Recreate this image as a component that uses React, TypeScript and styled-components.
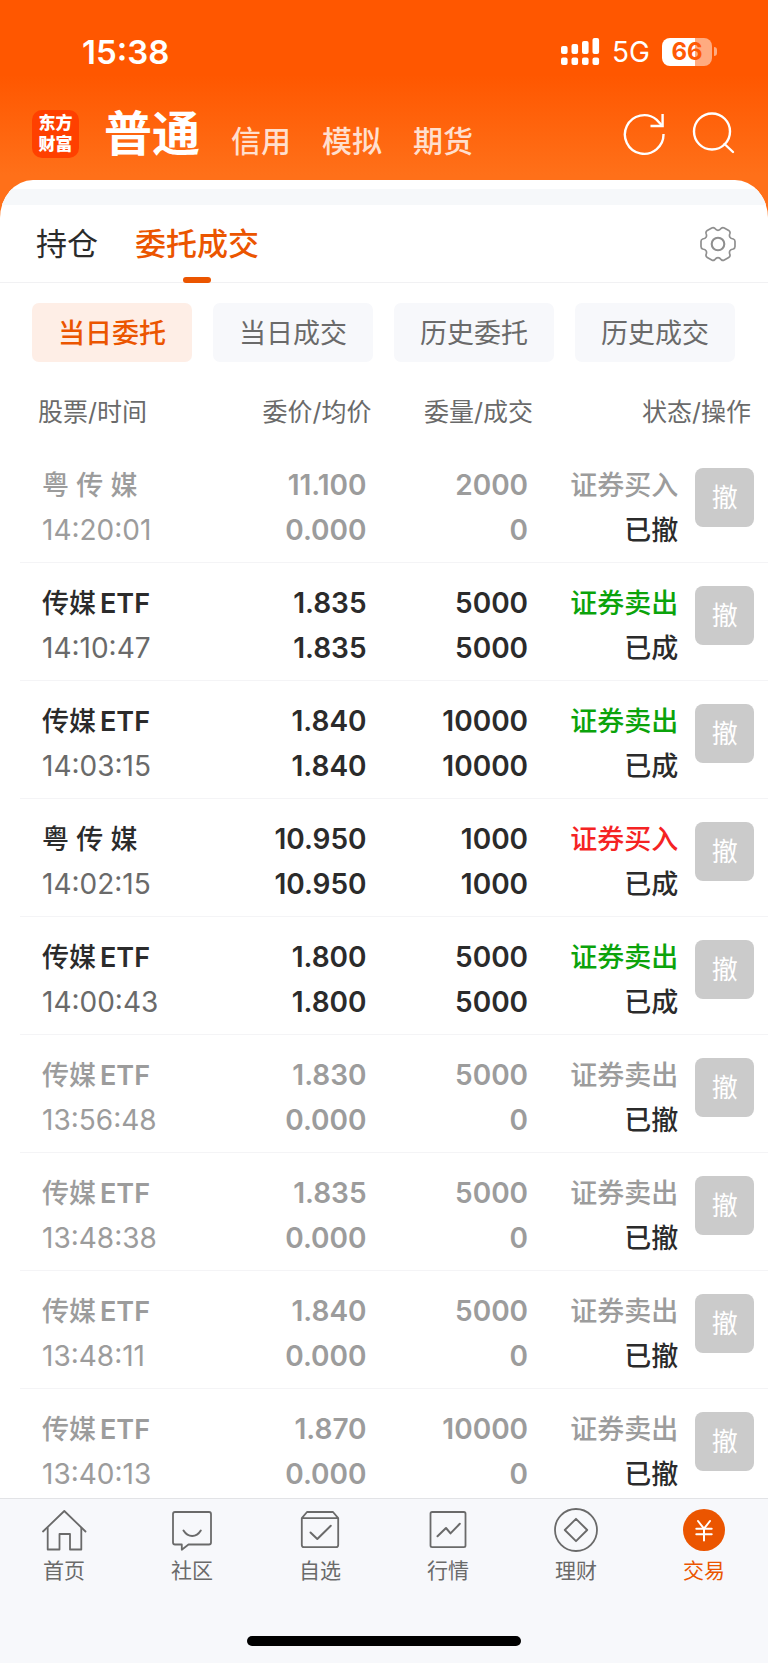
import React from 'react';
import styled, { createGlobalStyle } from 'styled-components';

const color = {
  accent: '#eb5500',
  ink: '#2b2b2b',
  muted: '#6a6a6a',
  faded: '#9c9c9c',
  surface: '#f7f8fb',
  sell: '#0ba30b',
  buy: '#f52323',
};

const GlobalStyle = createGlobalStyle`
  * { box-sizing: border-box; }
  body {
    margin: 0;
    background: #fff;
    font-family: Inter, "Noto Sans CJK SC", sans-serif;
    color: ${color.ink};
  }
  button {
    margin: 0;
    padding: 0;
    border: 0;
    background: none;
    font: inherit;
    color: inherit;
    cursor: pointer;
  }
  a { color: inherit; text-decoration: none; }
  svg { display: block; flex: none; }
`;

const Page = styled.div`
  display: flex;
  flex-direction: column;
  height: 100vh;
  overflow: hidden;
  background: #fff linear-gradient(#ff5700 75px, #ff7019 175px) no-repeat top / 100% 240px;
`;

const StatusBar = styled.div`
  display: flex;
  align-items: center;
  justify-content: space-between;
  height: 103px;
  flex: none;
  padding: 0 51px 0 82px;
  color: #fff;
`;

const Clock = styled.time`
  font-size: 33px;
  font-weight: 600;
  line-height: 40px;
`;

const Indicators = styled.div`
  display: flex;
  align-items: center;
  gap: 12px;
`;

const Network = styled.span`
  font-size: 28px;
  line-height: 32px;
`;

const BatteryGroup = styled.div`
  display: flex;
  align-items: center;
  gap: 2px;
`;

const Battery = styled.div`
  width: 50px;
  height: 28px;
  border-radius: 8px;
  background: linear-gradient(90deg, #fff 66%, #ffab80 66%);
  color: #ff5a05;
  font-size: 24px;
  font-weight: 700;
  line-height: 28px;
  text-align: center;
`;

const BatteryNub = styled.span`
  width: 3px;
  height: 9px;
  border-radius: 0 4px 4px 0;
  background: #ffab80;
`;

const Header = styled.header`
  display: flex;
  align-items: center;
  flex: none;
  height: 77px;
  padding: 0 33px 16px 32px;
  color: #fff;
`;

const Logo = styled.a`
  display: grid;
  place-content: center;
  width: 47px;
  height: 48px;
  border-radius: 10px;
  background: #ff4000;
  font-size: 17px;
  font-weight: 900;
  line-height: 21px;
  text-align: center;
`;

const Accounts = styled.nav`
  display: flex;
  align-items: flex-end;
  gap: 31px;
  flex: 1;
  margin-left: 25px;
`;

const Account = styled.button<{ $active?: boolean }>`
  font-size: ${(p) => (p.$active ? 48 : 30)}px;
  font-weight: ${(p) => (p.$active ? 700 : 500)};
  line-height: ${(p) => (p.$active ? 56 : 42)}px;
  color: ${(p) => (p.$active ? '#fff' : '#ffdfce')};
`;

const HeaderActions = styled.div`
  display: flex;
  gap: 25px;
`;

const Panel = styled.main`
  display: flex;
  flex-direction: column;
  flex: 1;
  min-height: 0;
  padding-top: 9px;
  overflow: hidden;
  border-radius: 33px 33px 0 0 / 38px 38px 0 0;
  background: #fff;
`;

const Strip = styled.div`
  flex: none;
  height: 16px;
  background: #f6f8fa;
`;

const TabRow = styled.div`
  display: flex;
  align-items: stretch;
  flex: none;
  gap: 37px;
  height: 78px;
  padding: 0 31px 0 36px;
  border-bottom: 1px solid #f1f1f3;
`;

const Tab = styled.button<{ $active?: boolean }>`
  position: relative;
  font-size: 31px;
  font-weight: ${(p) => (p.$active ? 500 : 400)};
  line-height: 77px;
  color: ${(p) => (p.$active ? color.accent : color.ink)};

  &::after {
    content: '';
    display: ${(p) => (p.$active ? 'block' : 'none')};
    position: absolute;
    bottom: -1px;
    left: 50%;
    width: 28px;
    height: 6px;
    margin-left: -14px;
    border-radius: 3px;
    background: ${color.accent};
  }
`;

const Settings = styled.button`
  margin-left: auto;
`;

const Filters = styled.div`
  display: grid;
  grid-template-columns: repeat(4, 1fr);
  gap: 21px;
  flex: none;
  padding: 20px 33px 0 32px;
`;

const Filter = styled.button<{ $active?: boolean }>`
  height: 59px;
  padding-top: 2px;
  border-radius: 7px;
  font-size: 27px;
  font-weight: ${(p) => (p.$active ? 500 : 400)};
  line-height: 57px;
  background: ${(p) => (p.$active ? '#feeee6' : color.surface)};
  color: ${(p) => (p.$active ? color.accent : color.muted)};
`;

const List = styled.div`
  flex: 1;
  min-height: 0;
  overflow-y: auto;
  scrollbar-width: none;
  padding-left: 20px;
`;

const Table = styled.table`
  width: 100%;
  table-layout: fixed;
  border-collapse: separate;
  border-spacing: 0;
`;

const Col = styled.col<{ $share: number }>`
  width: ${(p) => p.$share}%;
`;

const Heading = styled.th<{ $align?: 'right'; $end?: number }>`
  padding: 33px ${(p) => p.$end ?? 0}px 16px ${(p) => (p.$align ? 0 : 18)}px;
  font-size: 25px;
  font-weight: 400;
  line-height: 34px;
  text-align: ${(p) => p.$align ?? 'left'};
  white-space: nowrap;
  color: ${color.muted};
`;

const Cell = styled.td<{ $align?: 'right'; $end?: number }>`
  padding: 18px ${(p) => p.$end ?? 0}px 9px ${(p) => (p.$align ? 0 : 22)}px;
  border-bottom: 1px solid #f4f4f6;
  text-align: ${(p) => p.$align ?? 'left'};
  vertical-align: top;
  white-space: nowrap;
`;

const Line = styled.div<{ $tone: string }>`
  font-size: 27px;
  font-weight: 500;
  line-height: 45px;
  color: ${(p) => p.$tone};
`;

const Figure = styled(Line)<{ $light?: boolean }>`
  font-size: 28px;
  font-weight: ${(p) => (p.$light ? 400 : 600)};
`;

const Latin = styled.span`
  margin-left: 4px;
  font-weight: 600;
`;

const ActionCell = styled.td`
  padding: 23px 0 0 17px;
  border-bottom: 1px solid #f4f4f6;
  vertical-align: top;
`;

const Cancel = styled.button`
  display: block;
  width: 59px;
  height: 59px;
  border-radius: 8px;
  background: #cbcbcb;
  color: #fff;
  font-size: 26px;
  line-height: 59px;
`;

const BottomBar = styled.footer`
  flex: none;
  border-top: 1px solid #e2e3e6;
  background: ${color.surface};
`;

const BottomNav = styled.nav`
  display: grid;
  grid-template-columns: repeat(6, 1fr);
  padding-top: 9px;
`;

const NavItem = styled.a<{ $active?: boolean }>`
  display: flex;
  flex-direction: column;
  align-items: center;
  gap: 4px;
  font-size: 21px;
  line-height: 30px;
  color: ${(p) => (p.$active ? color.accent : color.muted)};
`;

const HomeIndicator = styled.div`
  width: 274px;
  height: 10px;
  margin: 50px auto 17px;
  border-radius: 5px;
  background: #000;
`;

const SignalIcon = () => (
  <svg width="39" height="28" viewBox="0 0 39 28" fill="#fff" aria-hidden="true">
    {[8, 6, 3, 0].map((top, i) => (
      <g key={i}>
        <rect x={i * 10.5} y={top} width="6.6" height={16 - top} rx="2" />
        <rect x={i * 10.5} y="19.5" width="6.6" height="7.5" rx="2" />
      </g>
    ))}
  </svg>
);

const RefreshIcon = () => (
  <svg width="44" height="44" viewBox="0 1 44 44" fill="none" stroke="#fff" strokeWidth="2.4" aria-hidden="true">
    <path d="M41.5 23A19.3 19.3 0 1 1 34.5 8.6L40 14.5" />
    <path d="M40.6 3V15H28.5" />
  </svg>
);

const SearchIcon = () => (
  <svg width="44" height="44" viewBox="0 1 44 44" fill="none" stroke="#fff" strokeWidth="2.4" strokeLinecap="round" aria-hidden="true">
    <circle cx="21" cy="20.5" r="18" />
    <path d="M33.5 33L42 41" />
  </svg>
);

const rotate = (x: number, y: number, degrees: number) => {
  const a = (degrees * Math.PI) / 180;
  const px = x * Math.cos(a) - y * Math.sin(a);
  const py = x * Math.sin(a) + y * Math.cos(a);
  return `${px.toFixed(2)} ${py.toFixed(2)}`;
};

const gearPath =
  [0, 60, 120, 180, 240, 300]
    .map((a, i) =>
      [
        i === 0 ? `M${rotate(15.3, -5, a)}` : '',
        `Q${rotate(17, -4.4, a)} ${rotate(17, -2.6, a)}`,
        `L${rotate(17, 2.6, a)}`,
        `Q${rotate(17, 4.4, a)} ${rotate(15.3, 5, a)}`,
        `Q${rotate(11.6, 0, a + 30)} ${rotate(15.3, -5, a + 60)}`,
      ].join(''),
    )
    .join('') + 'Z';

const GearIcon = () => (
  <svg width="38" height="38" viewBox="-19 -19 38 38" fill="none" stroke="#8f8f8f" aria-hidden="true">
    <path d={gearPath} strokeWidth="1.7" strokeLinejoin="round" />
    <circle r="6.3" strokeWidth="2.1" />
  </svg>
);

const NavIcon = ({ children }: { children: React.ReactNode }) => (
  <svg
    width="46"
    height="44"
    viewBox="0 0 46 44"
    fill="none"
    stroke="currentColor"
    strokeWidth="1.8"
    strokeLinecap="round"
    strokeLinejoin="round"
    aria-hidden="true"
  >
    {children}
  </svg>
);

const navItems = [
  {
    label: '首页',
    icon: (
      <NavIcon>
        <path d="M2 23.5L23.3 3L44.5 23.5" />
        <path d="M6.7 20V41.5H18.5V26H29V41.5H40.3V20" />
      </NavIcon>
    ),
  },
  {
    label: '社区',
    icon: (
      <NavIcon>
        <path d="M6 4H40Q42 4 42 6V34.5Q42 36.5 40 36.5H19.5L12.8 41.8V36.5H6Q4 36.5 4 34.5V6Q4 4 6 4Z" />
        <path d="M14.5 22.5Q18 28 23.2 28T31.8 22.5" strokeWidth="2" />
      </NavIcon>
    ),
  },
  {
    label: '自选',
    icon: (
      <NavIcon>
        <path d="M4.8 10.2L10 4H36L41.2 10.2V37Q41.2 39.2 39 39.2H7Q4.8 39.2 4.8 37V10.2H41.2" />
        <path d="M13.5 24.5L20.3 31L33.8 17.8" strokeWidth="2" />
      </NavIcon>
    ),
  },
  {
    label: '行情',
    icon: (
      <NavIcon>
        <rect x="5.5" y="4" width="35" height="35.2" rx="1.6" />
        <path d="M12.5 28.3L21 20L25.5 25.4L34.8 15.8" strokeWidth="2" />
      </NavIcon>
    ),
  },
  {
    label: '理财',
    icon: (
      <NavIcon>
        <circle cx="23" cy="22" r="21" />
        <path d="M23 10.8L34.2 22L23 33.2L11.8 22Z" strokeWidth="1.9" />
      </NavIcon>
    ),
  },
  {
    label: '交易',
    active: true,
    icon: (
      <NavIcon>
        <circle cx="23" cy="22" r="21" fill={color.accent} stroke="none" />
        <path d="M17 13L23 20.7L29 13M23 20.7V32.5M15.3 20.7H30.7M15.3 26.3H30.7" stroke="#fff" strokeWidth="2" />
      </NavIcon>
    ),
  },
];

type Order = {
  name: string;
  suffix?: string;
  time: string;
  price: string;
  quantity: number;
  side: 'buy' | 'sell';
  filled: boolean;
};

const yue = { name: '粤 传 媒' };
const etf = { name: '传媒', suffix: 'ETF' };

const orders: Order[] = [
  { ...yue, time: '14:20:01', price: '11.100', quantity: 2000, side: 'buy', filled: false },
  { ...etf, time: '14:10:47', price: '1.835', quantity: 5000, side: 'sell', filled: true },
  { ...etf, time: '14:03:15', price: '1.840', quantity: 10000, side: 'sell', filled: true },
  { ...yue, time: '14:02:15', price: '10.950', quantity: 1000, side: 'buy', filled: true },
  { ...etf, time: '14:00:43', price: '1.800', quantity: 5000, side: 'sell', filled: true },
  { ...etf, time: '13:56:48', price: '1.830', quantity: 5000, side: 'sell', filled: false },
  { ...etf, time: '13:48:38', price: '1.835', quantity: 5000, side: 'sell', filled: false },
  { ...etf, time: '13:48:11', price: '1.840', quantity: 5000, side: 'sell', filled: false },
  { ...etf, time: '13:40:13', price: '1.870', quantity: 10000, side: 'sell', filled: false },
];

const OrderRow = ({ item }: { item: Order }) => {
  const tone = item.filled ? color.ink : color.faded;
  return (
    <tr>
      <Cell>
        <Line $tone={tone}>
          {item.name}
          {item.suffix && <Latin>{item.suffix}</Latin>}
        </Line>
        <Figure $tone={item.filled ? color.muted : color.faded} $light>
          {item.time}
        </Figure>
      </Cell>
      <Cell $align="right" $end={5}>
        <Figure $tone={tone}>{item.price}</Figure>
        <Figure $tone={tone}>{item.filled ? item.price : '0.000'}</Figure>
      </Cell>
      <Cell $align="right" $end={8}>
        <Figure $tone={tone}>{item.quantity}</Figure>
        <Figure $tone={tone}>{item.filled ? item.quantity : 0}</Figure>
      </Cell>
      <Cell $align="right">
        <Line $tone={item.filled ? color[item.side] : color.faded}>
          {item.side === 'buy' ? '证券买入' : '证券卖出'}
        </Line>
        <Line $tone={color.ink}>{item.filled ? '已成' : '已撤'}</Line>
      </Cell>
      <ActionCell>
        <Cancel type="button">撤</Cancel>
      </ActionCell>
    </tr>
  );
};

export default function App() {
  return (
    <Page>
      <GlobalStyle />
      <StatusBar>
        <Clock>15:38</Clock>
        <Indicators>
          <SignalIcon />
          <Network>5G</Network>
          <BatteryGroup>
            <Battery>66</Battery>
            <BatteryNub />
          </BatteryGroup>
        </Indicators>
      </StatusBar>

      <Header>
        <Logo href="#">
          <span>东方</span>
          <span>财富</span>
        </Logo>
        <Accounts>
          <Account type="button" $active>普通</Account>
          <Account type="button">信用</Account>
          <Account type="button">模拟</Account>
          <Account type="button">期货</Account>
        </Accounts>
        <HeaderActions>
          <button type="button" aria-label="刷新"><RefreshIcon /></button>
          <button type="button" aria-label="搜索"><SearchIcon /></button>
        </HeaderActions>
      </Header>

      <Panel>
        <Strip />
        <TabRow>
          <Tab type="button">持仓</Tab>
          <Tab type="button" $active>委托成交</Tab>
          <Settings type="button" aria-label="设置"><GearIcon /></Settings>
        </TabRow>
        <Filters>
          <Filter type="button" $active>当日委托</Filter>
          <Filter type="button">当日成交</Filter>
          <Filter type="button">历史委托</Filter>
          <Filter type="button">历史成交</Filter>
        </Filters>
        <List>
          <Table>
            <colgroup>
              <Col $share={24} />
              <Col $share={23} />
              <Col $share={22} />
              <Col $share={19} />
              <Col $share={12} />
            </colgroup>
            <thead>
              <tr>
                <Heading scope="col">股票/时间</Heading>
                <Heading scope="col" $align="right">委价/均价</Heading>
                <Heading scope="col" $align="right" $end={3}>委量/成交</Heading>
                <Heading scope="col" colSpan={2} $align="right" $end={17}>状态/操作</Heading>
              </tr>
            </thead>
            <tbody>
              {orders.map((item) => (
                <OrderRow key={item.time} item={item} />
              ))}
            </tbody>
          </Table>
        </List>
      </Panel>

      <BottomBar>
        <BottomNav>
          {navItems.map((item) => (
            <NavItem key={item.label} href="#" $active={item.active}>
              {item.icon}
              {item.label}
            </NavItem>
          ))}
        </BottomNav>
        <HomeIndicator />
      </BottomBar>
    </Page>
  );
}
